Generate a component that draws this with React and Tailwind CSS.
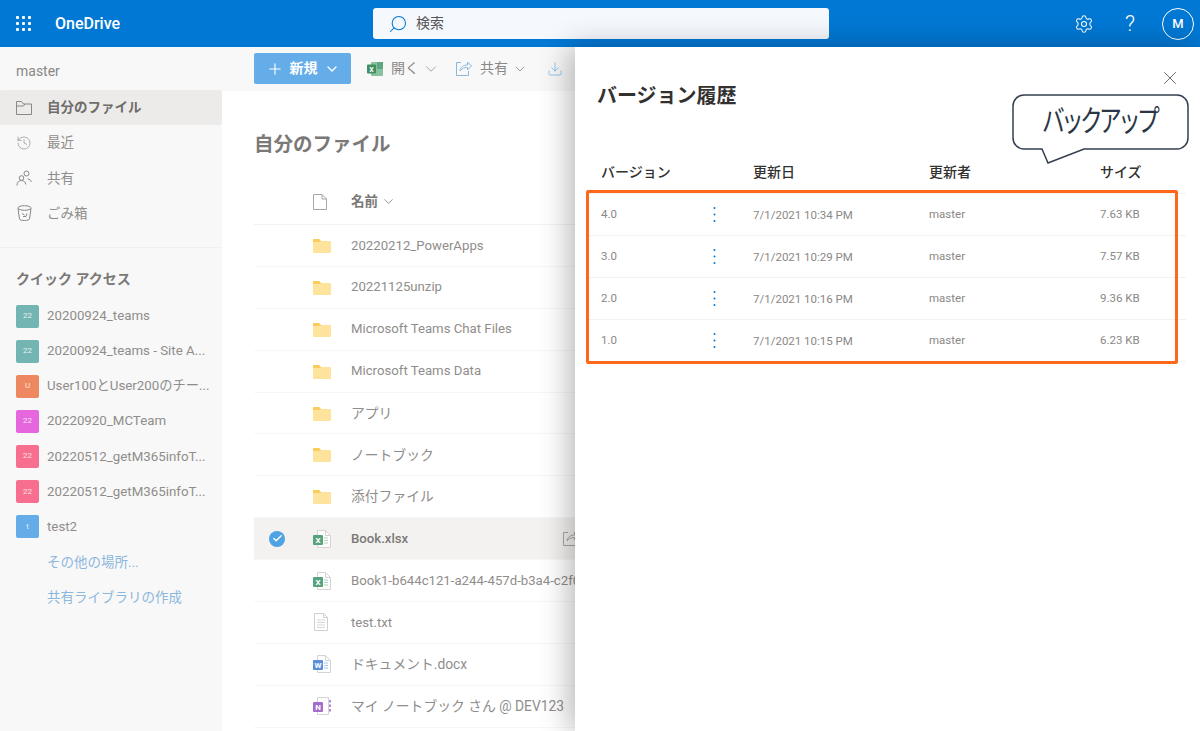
import React from 'react';
import { History, Settings, Search, ChevronDown, Plus, Check, X, Download } from 'lucide-react';

const fontStack = { fontFamily: 'Roboto, "Noto Sans CJK JP", sans-serif' };

const quick = [
  { label: '20200924_teams', mark: '22', color: 'bg-[#72b5b3]' },
  { label: '20200924_teams - Site A...', mark: '22', color: 'bg-[#72b5b3]' },
  { label: 'User100とUser200のチー...', mark: 'U', color: 'bg-[#ed8860]' },
  { label: '20220920_MCTeam', mark: '22', color: 'bg-[#e666dd]' },
  { label: '20220512_getM365infoT...', mark: '22', color: 'bg-[#f76e8e]' },
  { label: '20220512_getM365infoT...', mark: '22', color: 'bg-[#f76e8e]' },
  { label: 'test2', mark: 't', color: 'bg-[#64ade8]' },
];

const files = [
  { name: '20220212_PowerApps', type: 'folder' },
  { name: '20221125unzip', type: 'folder' },
  { name: 'Microsoft Teams Chat Files', type: 'folder' },
  { name: 'Microsoft Teams Data', type: 'folder' },
  { name: 'アプリ', type: 'folder', jp: true },
  { name: 'ノートブック', type: 'folder', jp: true },
  { name: '添付ファイル', type: 'folder', jp: true },
  { name: 'Book.xlsx', type: 'excel', selected: true },
  { name: 'Book1-b644c121-a244-457d-b3a4-c2f0a1d7e8b6.xlsx', type: 'excel' },
  { name: 'test.txt', type: 'text' },
  { name: 'ドキュメント.docx', type: 'word', jp: true },
  { name: 'マイ ノートブック さん @ DEV123', type: 'note', jp: true },
];

const versions = [
  { v: '4.0', date: '7/1/2021 10:34 PM', size: '7.63 KB' },
  { v: '3.0', date: '7/1/2021 10:29 PM', size: '7.57 KB' },
  { v: '2.0', date: '7/1/2021 10:16 PM', size: '9.36 KB' },
  { v: '1.0', date: '7/1/2021 10:15 PM', size: '6.23 KB' },
];

const FolderIcon = () => (
  <svg width="18" height="15" viewBox="0 0 18 15">
    <path d="M0 2a1 1 0 0 1 1-1h5l2 2h9a1 1 0 0 1 1 1v10a1 1 0 0 1-1 1H1a1 1 0 0 1-1-1z" fill="#fde39c" />
    <path d="M0 2a1 1 0 0 1 1-1h5l2 2-2 1H0z" fill="#fbcb5c" />
  </svg>
);

const OfficeDoc = ({ color, letter, lines }) => (
  <svg width="18" height="18" viewBox="0 0 18 18">
    <path d="M4.500 .5h8l5 5v12h-13z" fill="#fff" stroke="#d4d4d4" />
    <path d="M12.500 .5v5h5" fill="none" stroke="#d4d4d4" />
    <path d="M11 8h4M11 10.500h4M11 13h4" stroke={lines} strokeWidth="1.200" />
    <rect x="0" y="5" width="10" height="10" rx="1" fill={color} />
    <text x="5" y="13" fontSize="8" fontWeight="700" fill="#fff" textAnchor="middle">{letter}</text>
  </svg>
);

const TextDoc = () => (
  <svg width="16" height="18" viewBox="0 0 16 18">
    <path d="M1.500 .5h9l4 4v13h-13z" fill="#fff" stroke="#d0d0d0" />
    <path d="M10.500 .5v4h4" fill="none" stroke="#d0d0d0" />
    <path d="M4 7h8M4 9.500h8M4 12h8M4 14.500h8" stroke="#d6d6d6" />
  </svg>
);

const NoteDoc = () => (
  <svg width="18" height="18" viewBox="0 0 18 18">
    <path d="M4.500 .5h11v17h-11z" fill="#fff" stroke="#d4d4d4" />
    <path d="M17 3v2.500M17 7.500V10M17 12v2.500" stroke="#b587d6" strokeWidth="2" />
    <rect x="0" y="5" width="10" height="10" rx="1" fill="#a56ccb" />
    <text x="5" y="13" fontSize="8" fontWeight="700" fill="#fff" textAnchor="middle">N</text>
  </svg>
);

const fileIcon = (type) => {
  if (type === 'folder') return <FolderIcon />;
  if (type === 'excel') return <OfficeDoc color="#57a37e" letter="X" lines="#a9d3bd" />;
  if (type === 'word') return <OfficeDoc color="#5c8fd6" letter="W" lines="#a9c6ec" />;
  if (type === 'note') return <NoteDoc />;
  return <TextDoc />;
};

const NavFolder = () => (
  <svg width="16" height="14" viewBox="0 0 16 14" fill="none" stroke="#8a8886">
    <path d="M.5 13.500V.5h5l2 2.500h8v10.500z" />
    <path d="M.5 5h7l1.500-2" />
  </svg>
);

const SharedIcon = () => (
  <svg width="16" height="16" viewBox="0 0 16 16" fill="none" stroke="#8a8886" strokeWidth="1">
    <circle cx="10.500" cy="3.500" r="2.500" />
    <circle cx="5.500" cy="8" r="2.300" />
    <path d="M1 15.500c0-3 1.800-5 4.500-5s4 1.800 4.300 4M11.500 9c2 0 3.300 1 3.800 3" />
  </svg>
);

const BinIcon = () => (
  <svg width="15" height="16" viewBox="0 0 15 16" fill="none" stroke="#8a8886">
    <ellipse cx="7.500" cy="3" rx="6.500" ry="2.300" />
    <path d="M1 3.500l1.500 10.500c.3 1 2.500 1.500 5 1.500s4.700-.5 5-1.500L14 3.500" />
    <path d="M5 8.500l2.500 1.500M10 8.500l-1 3H6" />
  </svg>
);

const Waffle = () => (
  <div className="grid grid-cols-3 gap-[3px] w-[15px]">
    {[0, 1, 2, 3, 4, 5, 6, 7, 8].map((i) => (
      <span key={i} className="w-[3px] h-[3px] bg-white rounded-[1px]" />
    ))}
  </div>
);

const ShareArrow = ({ stroke }) => (
  <svg width="16" height="15" viewBox="0 0 16 15" fill="none" stroke={stroke} strokeWidth="1">
    <path d="M5 1.500H.5v13h12V10" />
    <path d="M4 10c.5-4 3.500-6 7.500-6V1l4 4-4 4V6.500C8.500 6.500 6 7.500 4 10z" />
  </svg>
);

const ExcelSmall = () => (
  <svg width="16" height="14" viewBox="0 0 16 14">
    <rect x="4" y="0" width="12" height="14" rx="1" fill="#86c29f" />
    <rect x="10" y="0" width="6" height="7" fill="#5fa87f" />
    <rect x="0" y="2.500" width="9" height="9" rx="1" fill="#3f8f63" />
    <text x="4.500" y="10" fontSize="7" fontWeight="700" fill="#fff" textAnchor="middle">X</text>
  </svg>
);

const MoreDots = () => (
  <svg width="3" height="17" viewBox="0 0 3 17" fill="#0078d4">
    <circle cx="1.500" cy="2" r="1" />
    <circle cx="1.500" cy="8.500" r="1" />
    <circle cx="1.500" cy="15" r="1" />
  </svg>
);

const Callout = () => (
  <div className="absolute left-[437px] top-[47px] w-[178px] h-[72px] flex items-start justify-center">
    <svg className="absolute inset-0" width="178" height="72" viewBox="0 0 178 72" fill="none">
      <path d="M12 1h153a11 11 0 0 1 11 11v32a11 11 0 0 1-11 11H72L36 69l-6-14H12A11 11 0 0 1 1 44V12A11 11 0 0 1 12 1z" fill="#fff" stroke="#333f50" strokeWidth="1.500" />
    </svg>
    <span className="relative mt-[9px] mr-[5px] text-[30px] leading-[36px] tracking-[-5px] text-[#2b3646] font-normal scale-x-[0.76] whitespace-nowrap">バックアップ</span>
  </div>
);

const VersionPanel = () => (
  <div className="absolute right-0 top-[47px] bottom-0 w-[625px] bg-white shadow-[-6px_0_28px_rgba(0,0,0,0.28)] text-[#323130]">
    <div className="flex justify-end pt-[20px] pr-[19px] h-[33px]">
      <X size={22} strokeWidth={1} className="text-[#605e5c] shrink-0" />
    </div>
    <h2 className="pl-[22px] pt-[1px] text-[20px] leading-[30px] font-semibold">バージョン履歴</h2>
    <div className="ml-[11px] w-[600px] mt-[49px]">
      <div className="h-[24px] pl-[15px] grid grid-cols-[152px_176px_171px_86px] items-center text-[14px] font-medium">
        <span>バージョン</span>
        <span>更新日</span>
        <span>更新者</span>
        <span>サイズ</span>
      </div>
      <div className="relative mt-[9px] border-t border-[#f3f2f1]">
        {versions.map((r) => (
          <div key={r.v} className="h-[42px] pl-[15px] border-b border-[#f3f2f1] grid grid-cols-[112px_40px_176px_171px_86px] items-center text-[11.500px] text-[#8a8886]">
            <span>{r.v}</span>
            <MoreDots />
            <span className="pt-[3px]">{r.date}</span>
            <span>master</span>
            <span>{r.size}</span>
          </div>
        ))}
        <div className="absolute left-0 right-[8px] -top-[4px] -bottom-[2px] border-[3px] border-[#ff671b] rounded-[2px]" />
      </div>
    </div>
    <Callout />
  </div>
);

export default function App() {
  return (
    <div style={fontStack} className="relative w-[1200px] h-[731px] overflow-hidden flex flex-col bg-white">
      <header className="h-[47px] shrink-0 bg-[#0078d4] flex items-center text-white">
        <div className="w-[46px] flex justify-center"><Waffle /></div>
        <span className="ml-[9px] text-[16px] font-medium w-[318px]">OneDrive</span>
        <div className="w-[456px] h-[31px] bg-[#f5f8fc] rounded-[3px] flex items-center pl-[15px] gap-[8px] text-[#555]">
          <Search size={20} strokeWidth={1.25} className="text-[#0078d4] -scale-x-100" />
          <span className="text-[14px]">検索</span>
        </div>
        <div className="ml-auto flex items-center pr-[6px]">
          <Settings size={20} strokeWidth={1.25} />
          <span className="ml-[29px] w-[14px] text-center text-[22px] font-light leading-none">?</span>
          <span className="ml-[25px] w-[32px] h-[32px] rounded-full border border-white flex items-center justify-center text-[13px] font-medium">M</span>
        </div>
      </header>

      <div className="flex flex-1 min-h-0">
        <aside className="w-[222px] shrink-0 bg-[#f8f8f8] text-[#8f8d8b] text-[14px]">
          <div className="h-[43px] pl-[16px] pt-[14px] text-[14px] leading-[20px] text-[#8a8886]">master</div>
          <div className="h-[35px] pl-[16px] flex items-center gap-[15px] bg-[#edebe9] rounded-[2px] text-[#6f6d6b] font-semibold">
            <NavFolder />
            <span className="text-[13.500px]">自分のファイル</span>
          </div>
          {[
            ['最近', <History key="h" size={16} strokeWidth={1} className="text-[#8a8886]" />],
            ['共有', <SharedIcon key="s" />],
            ['ごみ箱', <BinIcon key="t" />],
          ].map(([label, icon]) => (
            <div key={label} className="h-[35.200px] pl-[16px] flex items-center gap-[15px]">
              <span className="w-[16px] flex justify-center">{icon}</span>
              <span className="text-[13.500px]">{label}</span>
            </div>
          ))}
          <div className="mt-[16px] border-t border-[#f0f0f0] pt-[19px] pl-[16px] text-[14px] leading-[24px] font-semibold text-[#7b7977]">クイック アクセス</div>
          <div className="mt-[8px]">
            {quick.map((q, i) => (
              <div key={i} className="h-[35.100px] pl-[16px] flex items-center gap-[8px] whitespace-nowrap">
                <span className={`${q.color} w-[23px] h-[23px] rounded-[2px] flex items-center justify-center text-[8px] text-white/80`}>{q.mark}</span>
                <span className="text-[13.300px]">{q.label}</span>
              </div>
            ))}
            {['その他の場所...', '共有ライブラリの作成'].map((t) => (
              <div key={t} className="h-[35.100px] pl-[47px] flex items-center text-[#8cb7dc] text-[13.500px]">{t}</div>
            ))}
          </div>
        </aside>

        <main className="flex-1 min-w-0 flex flex-col">
          <div className="h-[44px] shrink-0 bg-[#f8f8f8] pl-[32px] flex items-center text-[14px] text-[#8a8886]">
            <div className="w-[97px] h-[31px] -mt-[1px] bg-[#64ade8] rounded-[2px] flex items-center justify-center gap-[6px] text-white font-semibold">
              <Plus size={18} strokeWidth={1.5} />
              <span>新規</span>
              <ChevronDown size={16} strokeWidth={2} />
            </div>
            <div className="-mt-[1px] ml-[16px] flex items-center">
              <ExcelSmall />
              <span className="ml-[8px]">開く</span>
              <ChevronDown size={18} strokeWidth={1} className="ml-[3px]" />
              <span className="ml-[16px]"><ShareArrow stroke="#8cb7dc" /></span>
              <span className="ml-[8px]">共有</span>
              <ChevronDown size={16} strokeWidth={1.25} className="ml-[4px]" />
              <Download size={16} strokeWidth={1} className="ml-[19px] text-[#64ade8]" />
            </div>
          </div>

          <div className="pl-[32px] flex-1 min-h-0">
            <h1 className="pt-[39px] text-[19.500px] leading-[30px] font-bold text-[#7b7977]">自分のファイル</h1>
            <div className="mt-[26px] h-[39px] border-b border-[#f3f2f1] flex items-center text-[13.500px] font-semibold text-[#7b7977] pb-[7px]">
              <svg className="ml-[59px]" width="14" height="16" viewBox="0 0 14 16" fill="none" stroke="#a8a6a4">
                <path d="M.5.500h8.500l4.500 4.500v10.500H.5zM9 .500V5h4.500" />
              </svg>
              <span className="ml-[24px]">名前</span>
              <ChevronDown size={15} strokeWidth={1.25} className="ml-[3px]" />
            </div>
            {files.map((f) => (
              <div key={f.name} className={`relative h-[41.900px] flex items-center border-b border-[#f7f7f7] whitespace-nowrap ${f.jp ? 'text-[13.800px]' : 'text-[13.200px]'} ${f.selected ? 'bg-[#f3f2f1] text-[#7b7977] font-medium' : 'text-[#8f8d8b]'}`}>
                <span className="w-[59px] flex justify-center">
                  {f.selected && (
                    <span className="mr-[13px] w-[16px] h-[16px] rounded-full bg-[#4fa3e3] flex items-center justify-center">
                      <Check size={11} strokeWidth={3} className="text-white" />
                    </span>
                  )}
                </span>
                <span className="w-[38px] flex">{fileIcon(f.type)}</span>
                <span>{f.name}</span>
                {f.selected && (
                  <span className="absolute left-[309px]"><ShareArrow stroke="#a8a6a4" /></span>
                )}
              </div>
            ))}
          </div>
        </main>
      </div>

      <VersionPanel />
    </div>
  );
}
